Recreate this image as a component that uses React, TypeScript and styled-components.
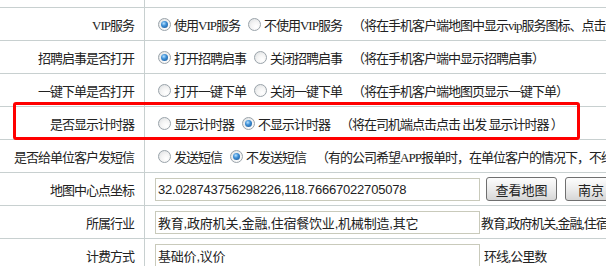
import React from 'react';
import styled, { createGlobalStyle, css } from 'styled-components';

const lineColor = '#c8d0d0';
const textColor = '#222222';

const GlobalStyle = createGlobalStyle`
  html, body {
    margin: 0;
    padding: 0;
    background: #ffffff;
    overflow: hidden;
  }
`;

const Page = styled.div`
  position: relative;
  width: 606px;
  height: 266px;
  overflow: hidden;
  font-family: 'Liberation Serif', 'Noto Sans CJK SC', serif;
  font-size: 13px;
  letter-spacing: -1px;
  color: ${textColor};
`;

const Table = styled.div`
  display: flex;
  flex-direction: column;
  width: 820px;
`;

const Row = styled.div<{ $short?: boolean }>`
  display: grid;
  grid-template-columns: 145px 1fr;
  height: ${({ $short }) => ($short ? '7px' : '32px')};
  border-bottom: 1px solid ${lineColor};
`;

const Label = styled.div`
  display: flex;
  align-items: center;
  justify-content: flex-end;
  padding-right: 10px;
  border-right: 1px solid ${lineColor};
  white-space: nowrap;
`;

const Value = styled.div`
  display: flex;
  align-items: center;
  padding-left: 10px;
  white-space: nowrap;
`;

const Option = styled.label`
  display: inline-flex;
  align-items: center;
  margin-right: 5px;
`;

const Radio = styled.span<{ $checked?: boolean }>`
  position: relative;
  box-sizing: border-box;
  flex: none;
  width: 13px;
  height: 13px;
  margin: 0 3px 0 3px;
  border-radius: 50%;
  border: 1px solid #9aa3aa;
  background: radial-gradient(circle at 65% 70%, #ffffff 0%, #f4f4f4 45%, #d9dcde 100%);
  ${({ $checked }) =>
    $checked &&
    css`
      &::after {
        content: '';
        position: absolute;
        left: 2px;
        top: 2px;
        width: 7px;
        height: 7px;
        border-radius: 50%;
        background: radial-gradient(circle at 40% 35%, #b8e2ff 0%, #3d8fd6 40%, #1a4f8c 100%);
      }
    `}
`;

const Note = styled.span`
  margin-left: 5px;
  white-space: pre;
`;

const TextInput = styled.input`
  box-sizing: border-box;
  width: 325px;
  height: 23px;
  margin: 0;
  padding: 0 2px;
  border: 1px solid #c9cabb;
  background: #ffffff;
  font-family: 'Liberation Sans', 'Noto Sans CJK SC', sans-serif;
  font-size: 13px;
  letter-spacing: -0.2px;
  color: ${textColor};
  outline: none;
`;

const Button = styled.button<{ $width: number; $gap: number }>`
  box-sizing: border-box;
  flex: none;
  width: ${({ $width }) => $width}px;
  height: 24px;
  margin: 0 0 0 ${({ $gap }) => $gap}px;
  padding: 0;
  border: 1px solid #6f6f6f;
  border-radius: 3px;
  background: linear-gradient(#fdfdfd 0%, #ececec 50%, #d6d6d6 100%);
  font-family: 'Noto Sans CJK SC', sans-serif;
  font-size: 13px;
  letter-spacing: 0;
  color: #222222;
`;

const Extra = styled.span<{ $gap?: number }>`
  margin-left: ${({ $gap }) => $gap ?? 1}px;
`;

const Highlight = styled.div`
  position: absolute;
  left: 13px;
  top: 102px;
  width: 567px;
  height: 38px;
  box-sizing: border-box;
  border: 3px solid #ff0000;
  border-radius: 3px;
  pointer-events: none;
`;

type Choice = { text: string; checked?: boolean };

type RadioRow = { label: string; choices: Choice[]; note: string };

const radioRows: RadioRow[] = [
  {
    label: 'VIP服务',
    choices: [{ text: '使用VIP服务', checked: true }, { text: '不使用VIP服务' }],
    note: '（将在手机客户端地图中显示vip服务图标、点击后可查看vip服务详情）',
  },
  {
    label: '招聘启事是否打开',
    choices: [{ text: '打开招聘启事', checked: true }, { text: '关闭招聘启事' }],
    note: '（将在手机客户端中显示招聘启事）',
  },
  {
    label: '一键下单是否打开',
    choices: [{ text: '打开一键下单' }, { text: '关闭一键下单' }],
    note: '（将在手机客户端地图页显示一键下单）',
  },
  {
    label: '是否显示计时器',
    choices: [{ text: '显示计时器' }, { text: '不显示计时器', checked: true }],
    note: '（将在司机端点击点击 出发 显示计时器 ）',
  },
  {
    label: '是否给单位客户发短信',
    choices: [{ text: '发送短信' }, { text: '不发送短信', checked: true }],
    note: '（有的公司希望APP报单时，在单位客户的情况下，不给客户发送短信）',
  },
];

const App = () => (
  <Page>
    <GlobalStyle />
    <Table>
      <Row $short>
        <Label />
        <Value />
      </Row>
      {radioRows.map((row) => (
        <Row key={row.label}>
          <Label>{row.label}</Label>
          <Value>
            {row.choices.map((choice) => (
              <Option key={choice.text}>
                <Radio $checked={choice.checked} />
                {choice.text}
              </Option>
            ))}
            <Note>{row.note}</Note>
          </Value>
        </Row>
      ))}
      <Row>
        <Label>地图中心点坐标</Label>
        <Value>
          <TextInput readOnly defaultValue="32.028743756298226,118.76667022705078" />
          <Button $width={71} $gap={6}>查看地图</Button>
          <Button $width={52} $gap={8}>南京</Button>
        </Value>
      </Row>
      <Row>
        <Label>所属行业</Label>
        <Value>
          <TextInput readOnly defaultValue="教育,政府机关,金融,住宿餐饮业,机械制造,其它" />
          <Extra>教育,政府机关,金融,住宿餐饮业,机械制造,其它</Extra>
        </Value>
      </Row>
      <Row>
        <Label>计费方式</Label>
        <Value>
          <TextInput readOnly defaultValue="基础价,议价" />
          <Extra $gap={4}>环线,公里数</Extra>
        </Value>
      </Row>
    </Table>
    <Highlight />
  </Page>
);

export default App;
